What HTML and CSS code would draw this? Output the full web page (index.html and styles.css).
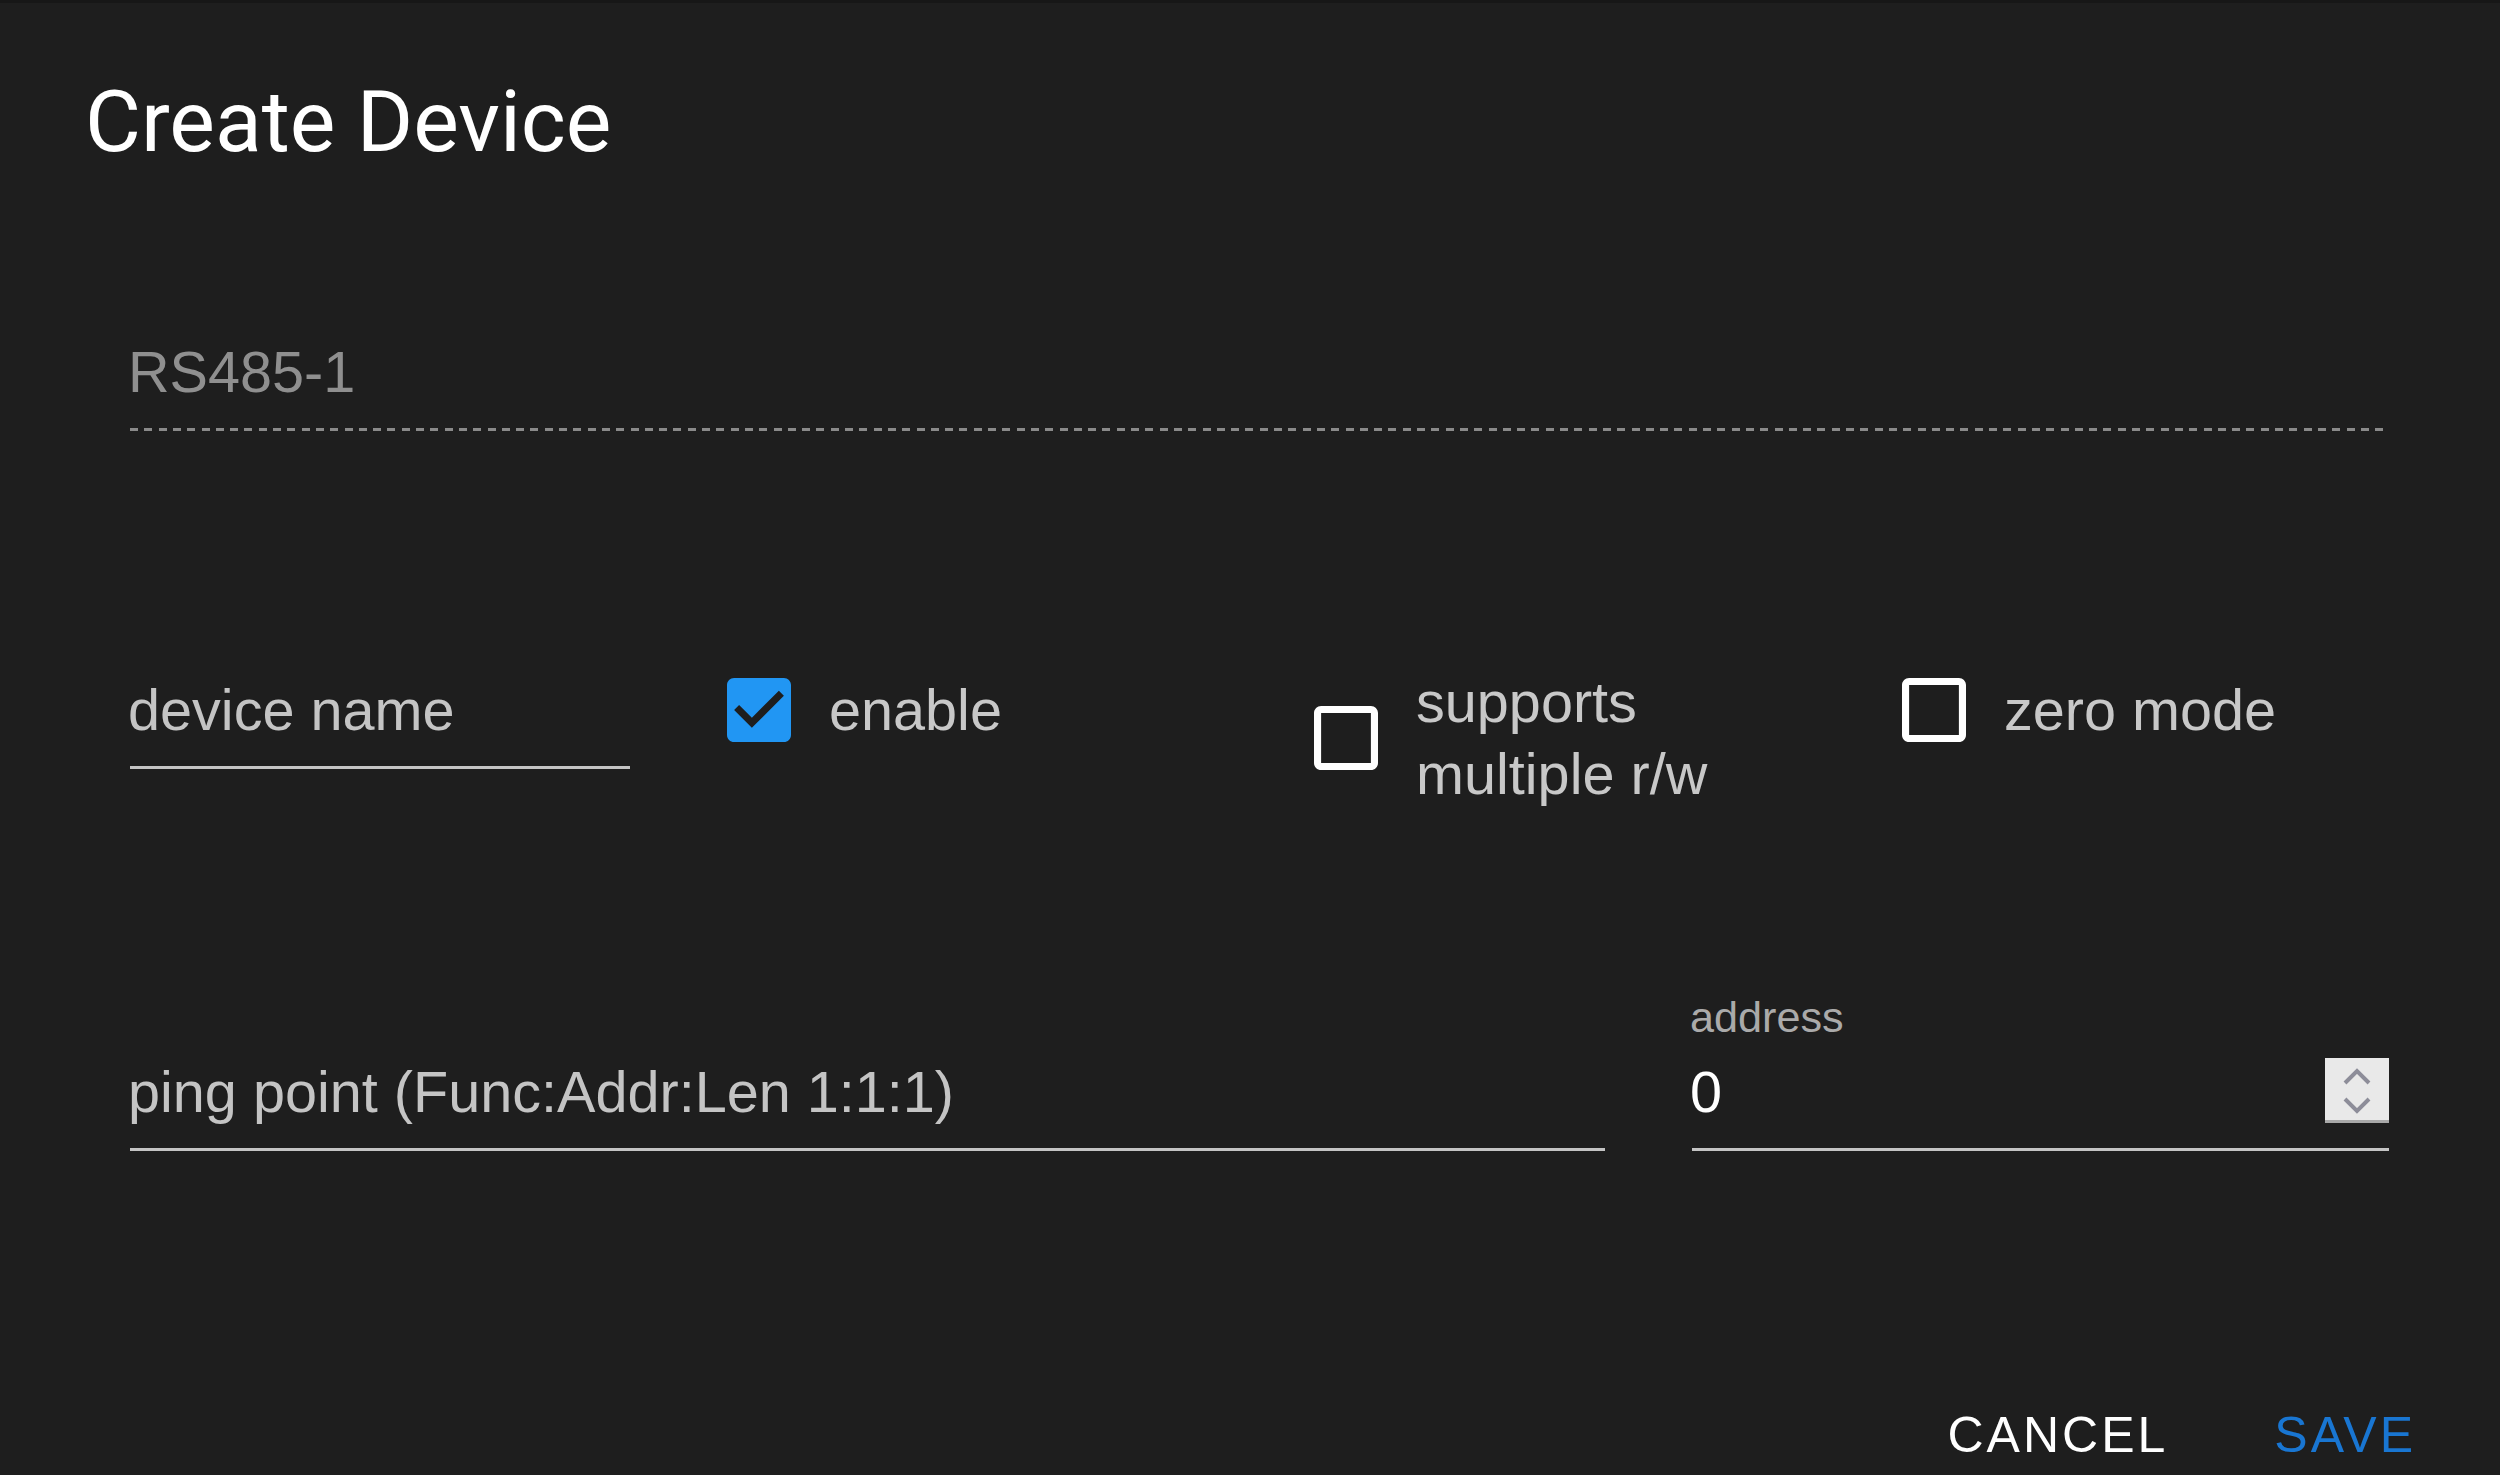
FILE: index.html
```html
<!DOCTYPE html>
<html lang="en">
<head>
<meta charset="utf-8">
<title>Create Device</title>
<link rel="stylesheet" href="styles.css">
</head>
<body>
<div class="strip"></div>
<div class="dialog">
  <h2 class="title">Create Device</h2>
  <div class="content">
    <div class="field disabled"><div class="input">RS485-1</div></div>
    <div class="row2">
      <div class="field name"><div class="input label">device name</div></div>
      <label class="check">
        <svg class="box" viewBox="3 3 18 18"><path class="on" d="M19 3H5c-1.11 0-2 .9-2 2v14c0 1.1.89 2 2 2h14c1.11 0 2-.9 2-2V5c0-1.1-.89-2-2-2zm-9 14l-5-5 1.41-1.41L10 14.17l7.59-7.59L19 8l-9 9z"/></svg>
        <span>enable</span>
      </label>
      <label class="check multi">
        <svg class="box" viewBox="3 3 18 18"><path class="off" d="M19 5v14H5V5h14m0-2H5c-1.1 0-2 .9-2 2v14c0 1.1.9 2 2 2h14c1.1 0 2-.9 2-2V5c0-1.1-.9-2-2-2z"/></svg>
        <span>supports<br>multiple r/w</span>
      </label>
      <label class="check">
        <svg class="box" viewBox="3 3 18 18"><path class="off" d="M19 5v14H5V5h14m0-2H5c-1.1 0-2 .9-2 2v14c0 1.1.9 2 2 2h14c1.1 0 2-.9 2-2V5c0-1.1-.9-2-2-2z"/></svg>
        <span>zero mode</span>
      </label>
    </div>
    <div class="row3">
      <div class="field ping"><div class="input label">ping point (Func:Addr:Len 1:1:1)</div></div>
      <div class="field addr">
        <div class="small-label">address</div>
        <div class="input input-row">
          <span class="value">0</span>
          <span class="spin">
            <svg viewBox="0 0 64 65" width="64" height="65"><polyline points="20,25 32,13 44,25" class="chev"/><polyline points="20,41 32,53 44,41" class="chev"/></svg>
          </span>
        </div>
      </div>
    </div>
  </div>
  <div class="actions">
    <button class="btn cancel">Cancel</button>
    <button class="btn save">Save</button>
  </div>
</div>
</body>
</html>
```

FILE: styles.css
```css
html, body {
  margin: 0;
  padding: 0;
}
body {
  background: #1e1e1e;
  height: 1475px;
  overflow: hidden;
}
.strip {
  height: 3px;
  background: #171717;
}
.title {
  margin: 0;
  padding: 67px 0 0 85px;
  font-family: Roboto, "Liberation Sans", sans-serif;
  font-weight: 400;
  font-size: 86px;
  line-height: 103px;
  color: #ffffff;
}
.content {
  padding: 0 111px 0 130px;
  font-family: "Liberation Sans", Arial, sans-serif;
  font-size: 57.6px;
}
.field .input {
  line-height: 68px;
  padding-bottom: 22px;
  border-bottom: 3px solid #c4c4c4;
  text-indent: -2px;
}
.label {
  color: #c4c4c4;
}
.disabled .input {
  margin-top: 165px;
  color: #8f8f8f;
  border-bottom: none;
  padding-bottom: 25px;
  background: repeating-linear-gradient(to right, #8a8a8a 0 8px, transparent 8px 14.3px) left bottom / 100% 3px no-repeat;
}
.row2 {
  display: grid;
  grid-template-columns: 597px 587px 588px 1fr;
  align-items: start;
  margin-top: 245px;
}
.name {
  width: 500px;
}
.check {
  display: flex;
  align-items: center;
  gap: 38px;
  color: #c8c8c8;
  line-height: 68px;
  white-space: nowrap;
}
.box {
  width: 64px;
  height: 64px;
  flex: none;
  display: block;
}
.on {
  fill: #2196f3;
}
.off {
  fill: #ffffff;
}
.multi {
  line-height: 72px;
  margin-top: -10px;
}
.row3 {
  display: flex;
  align-items: flex-end;
  margin-top: 181px;
}
.ping {
  width: 1475px;
  flex: none;
}
.addr {
  flex: 1;
  margin-left: 87px;
}
.small-label {
  font-size: 43.2px;
  line-height: 52px;
  margin-bottom: 15px;
  color: #aaaaaa;
  text-indent: -2px;
}
.input-row {
  display: flex;
  align-items: flex-start;
}
.value {
  flex: 1;
  color: #ffffff;
}
.spin {
  width: 64px;
  height: 65px;
  flex: none;
  background: #e9e9e9;
  box-shadow: inset 0 -3px 0 #a8a8a8;
  display: block;
}
.spin svg {
  display: block;
}
.chev {
  fill: none;
  stroke: #8d8d99;
  stroke-width: 4;
}
.actions {
  display: flex;
  justify-content: flex-end;
  gap: 106px;
  padding-right: 84px;
  margin-top: 254px;
}
.btn {
  background: none;
  border: 0;
  padding: 0;
  margin: 0;
  font-family: "Liberation Sans", Arial, sans-serif;
  font-weight: 400;
  font-size: 50px;
  line-height: 60px;
  letter-spacing: 3px;
  text-transform: uppercase;
  color: #ffffff;
  cursor: pointer;
}
.save {
  color: #1976d2;
}
```
